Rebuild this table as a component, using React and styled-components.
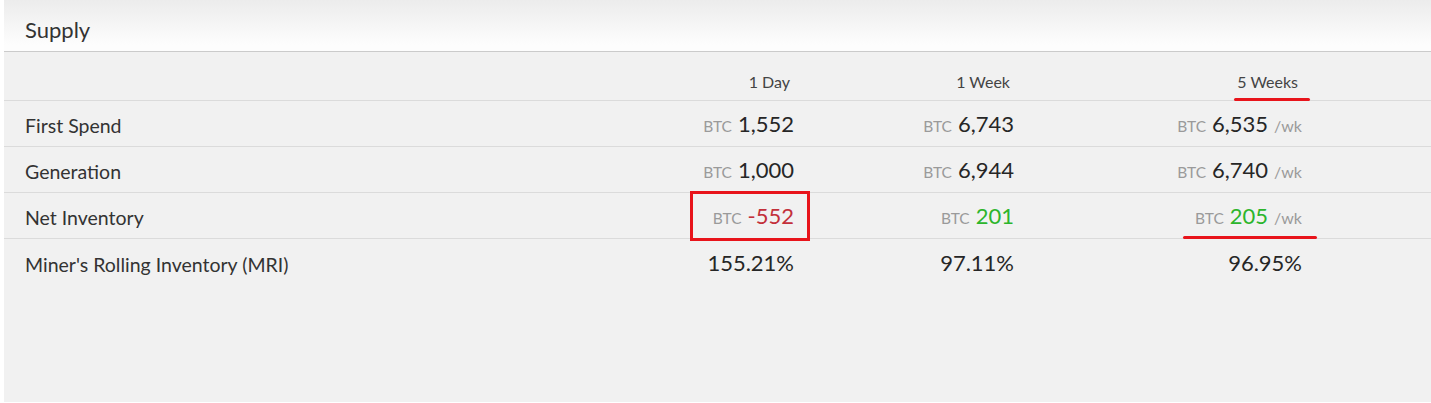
import styled, { createGlobalStyle, css } from "styled-components";

const GlobalStyle = createGlobalStyle`
  html, body {
    margin: 0;
    padding: 0;
    background: #fff;
  }
  body {
    font-family: Lato, "Liberation Sans", sans-serif;
    color: #333;
  }
`;

const Panel = styled.section`
  margin-left: 4px;
  height: 402px;
  background: #f1f1f1;
`;

const Title = styled.h2`
  margin: 0;
  height: 52px;
  box-sizing: border-box;
  padding: 19px 0 0 21px;
  font-size: 22px;
  font-weight: 400;
  line-height: 22px;
  color: #333;
  background: linear-gradient(#ececec, #fdfdfd 88%);
  border-bottom: 1px solid #cbcbcb;
`;

const Row = styled.div`
  display: grid;
  grid-template-columns: 1fr 300px 220px 288px 129px;
  box-sizing: border-box;
  height: ${(p) => (p.$head ? "49px" : "46px")};
  padding-bottom: ${(p) => (p.$head ? "10px" : "11px")};
  border-bottom: ${(p) => (p.$last ? "none" : "1px solid #dbdbdb")};
  align-items: end;
  line-height: 1;
`;

const Label = styled.div`
  padding-left: 21px;
  font-size: 19.5px;
  color: #333;
`;

const HeadCell = styled.div`
  text-align: right;
  padding-right: 4px;
  font-size: 16px;
  color: #444;
`;

const HeadText = styled.span`
  position: relative;
  ${(p) =>
    p.$marked &&
    css`
      &::after {
        content: "";
        position: absolute;
        left: -3px;
        right: -12px;
        bottom: -10px;
        height: 3px;
        border-radius: 2px;
        background: #e8141b;
      }
    `}
`;

const Cell = styled.div`
  display: flex;
  justify-content: flex-end;
  align-items: baseline;
`;

const Amount = styled.span`
  position: relative;
  display: inline-flex;
  align-items: baseline;

  ${(p) =>
    p.$boxed &&
    css`
      &::after {
        content: "";
        position: absolute;
        left: -23px;
        right: -16px;
        top: -14px;
        bottom: -14px;
        border: 3px solid #e8141b;
      }
    `}

  ${(p) =>
    p.$underlined &&
    css`
      &::after {
        content: "";
        position: absolute;
        left: -12px;
        right: -15px;
        bottom: -12px;
        height: 3px;
        border-radius: 2px;
        background: #e8141b;
      }
    `}
`;

const Unit = styled.span`
  font-size: 15.5px;
  color: #9a9a9a;
  margin-right: 6px;
`;

const Suffix = styled.span`
  font-size: 16px;
  color: #9a9a9a;
  margin-left: 6px;
`;

const toneColor = {
  neg: "#c3303a",
  pos: "#2cb52c",
  plain: "#262626",
};

const Num = styled.span`
  font-size: 22px;
  color: ${(p) => toneColor[p.$tone || "plain"]};
`;

const periods = ["1 Day", "1 Week", "5 Weeks"];

const rows = [
  {
    label: "First Spend",
    values: [{ v: "1,552" }, { v: "6,743" }, { v: "6,535", wk: true }],
  },
  {
    label: "Generation",
    values: [{ v: "1,000" }, { v: "6,944" }, { v: "6,740", wk: true }],
  },
  {
    label: "Net Inventory",
    values: [
      { v: "-552", tone: "neg", boxed: true },
      { v: "201", tone: "pos" },
      { v: "205", tone: "pos", wk: true, underlined: true },
    ],
  },
  {
    label: "Miner's Rolling Inventory (MRI)",
    values: [
      { v: "155.21%", bare: true },
      { v: "97.11%", bare: true },
      { v: "96.95%", bare: true },
    ],
  },
];

const App = () => {
  return (
    <>
      <GlobalStyle />
      <Panel>
        <Title>Supply</Title>
        <Row $head>
          <div />
          {periods.map((p) => (
            <HeadCell key={p}>
              <HeadText $marked={p === "5 Weeks"}>{p}</HeadText>
            </HeadCell>
          ))}
          <div />
        </Row>
        {rows.map((r, idx) => (
          <Row key={r.label} $last={idx === rows.length - 1}>
            <Label>{r.label}</Label>
            {r.values.map((c, i) => (
              <Cell key={i}>
                <Amount $boxed={c.boxed} $underlined={c.underlined}>
                  {!c.bare && <Unit>BTC</Unit>}
                  <Num $tone={c.tone}>{c.v}</Num>
                  {c.wk && <Suffix>/wk</Suffix>}
                </Amount>
              </Cell>
            ))}
            <div />
          </Row>
        ))}
      </Panel>
    </>
  );
};

export default App;
